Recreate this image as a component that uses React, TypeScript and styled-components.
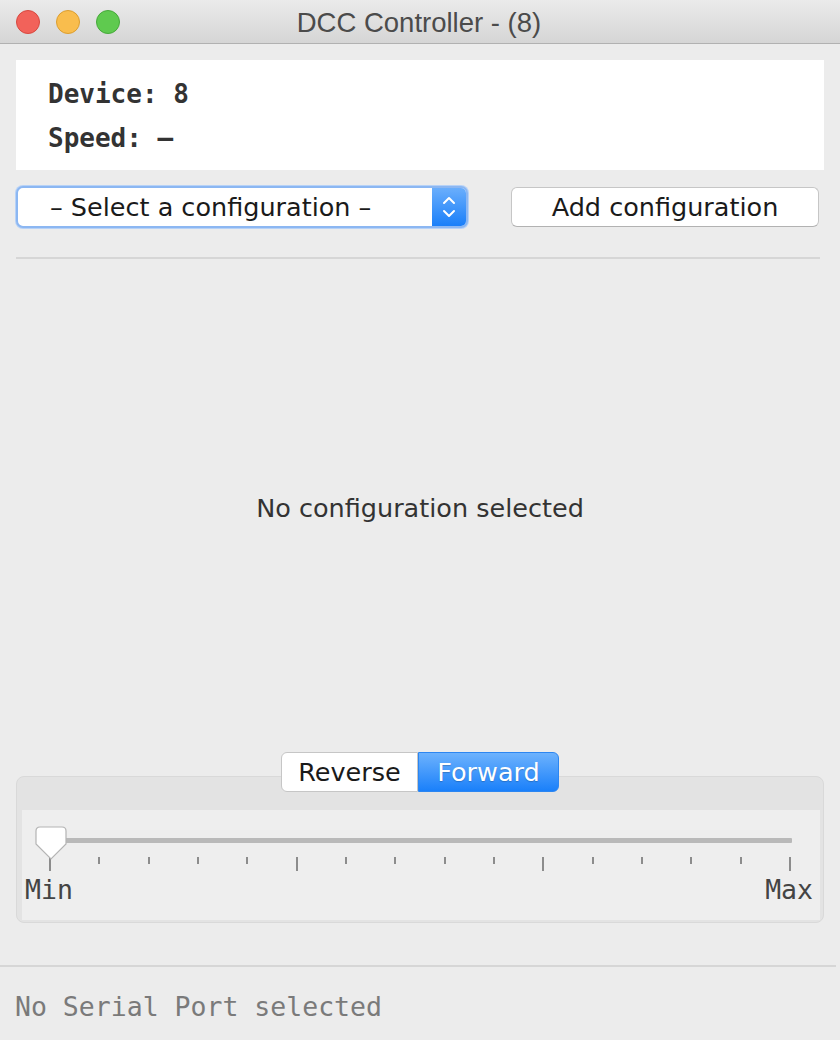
import React from "react";
import styled, { createGlobalStyle } from "styled-components";

const GlobalStyle = createGlobalStyle`
  html, body {
    margin: 0;
    padding: 0;
    background: #ececec;
  }
  * {
    box-sizing: border-box;
  }
`;

const TICKS = Array.from({ length: 16 }, (_, i) => i);

const App = () => {
  return (
    <Window>
      <GlobalStyle />
      <TitleBar>
        <Lights>
          <Light color="#f2625a" border="#d8483f" />
          <Light color="#f9bd4d" border="#dc9e2f" />
          <Light color="#5fca4f" border="#46a93a" />
        </Lights>
        <Title>DCC Controller - (8)</Title>
      </TitleBar>

      <Body>
        <InfoPanel>
          <InfoLine>Device: 8</InfoLine>
          <InfoLine>Speed: –</InfoLine>
        </InfoPanel>

        <ControlsRow>
          <Select>
            <SelectText>– Select a configuration –</SelectText>
            <Stepper>
              <svg width="16" height="28" viewBox="0 0 16 28">
                <path d="M3 10 L8 5 L13 10" stroke="#fff" strokeWidth="2" fill="none" strokeLinecap="round" strokeLinejoin="round" />
                <path d="M3 18 L8 23 L13 18" stroke="#fff" strokeWidth="2" fill="none" strokeLinecap="round" strokeLinejoin="round" />
              </svg>
            </Stepper>
          </Select>
          <PushButton>Add configuration</PushButton>
        </ControlsRow>

        <Divider />

        <Message>No configuration selected</Message>

        <DirectionRow>
          <Segment>Reverse</Segment>
          <Segment active>Forward</Segment>
        </DirectionRow>
        <GroupBox>
          <GroupInner>
            <TrackWrap>
              <Track />
              <Thumb>
                <svg width="32" height="35" viewBox="0 0 32 35">
                  <path
                    d="M5 1 H27 Q31 1 31 5 V18 L16 33 L1 18 V5 Q1 1 5 1 Z"
                    fill="#fff"
                    stroke="#b4b4b4"
                    strokeWidth="1.2"
                  />
                </svg>
              </Thumb>
            </TrackWrap>
            <Ticks>
              {TICKS.map((i) => (
                <Tick key={i} major={i % 5 === 0} />
              ))}
            </Ticks>
            <Labels>
              <span>Min</span>
              <span>Max</span>
            </Labels>
          </GroupInner>
        </GroupBox>
      </Body>

      <Footer>
        <StatusText>No Serial Port selected</StatusText>
      </Footer>
    </Window>
  );
};

export default App;

const Window = styled.div`
  width: 840px;
  height: 1040px;
  display: flex;
  flex-direction: column;
  background: #ececec;
  overflow: hidden;
`;

const TitleBar = styled.div`
  position: relative;
  height: 44px;
  flex-shrink: 0;
  display: flex;
  align-items: center;
  justify-content: center;
  padding-top: 3px;
  background: linear-gradient(#ebebeb, #d5d5d5);
  border-bottom: 1px solid #b1b1b1;
`;

const Lights = styled.div`
  position: absolute;
  left: 16px;
  top: 10px;
  display: flex;
  gap: 16px;
`;

const Light = styled.div<{ color: string; border: string }>`
  width: 24px;
  height: 24px;
  border-radius: 50%;
  background: ${(p) => p.color};
  border: 1px solid ${(p) => p.border};
`;

const Title = styled.div`
  font-family: "Liberation Sans", Arial, sans-serif;
  font-size: 27.5px;
  color: #4b4b4b;
  margin-left: -2px;
`;

const Body = styled.div`
  flex: 1;
  display: flex;
  flex-direction: column;
  padding: 16px 16px 0 16px;
`;

const InfoPanel = styled.div`
  height: 110px;
  background: #ffffff;
  padding: 12px 32px 0 32px;
`;

const InfoLine = styled.div`
  font-family: "DejaVu Sans Mono", monospace;
  font-weight: bold;
  font-size: 26px;
  line-height: 44px;
  color: #333;
`;

const ControlsRow = styled.div`
  display: flex;
  align-items: center;
  justify-content: space-between;
  margin-top: 16px;
  height: 42px;
`;

const Select = styled.div`
  width: 452px;
  height: 42px;
  display: flex;
  background: #fff;
  border: 2px solid #8cb7f2;
  border-radius: 7px;
  box-shadow: 0 0 0 1px #b7d2f7;
  overflow: hidden;
`;

const SelectText = styled.div`
  flex: 1;
  padding-left: 32px;
  font-family: "DejaVu Sans", sans-serif;
  font-size: 25.5px;
  line-height: 38px;
  color: #1a1a1a;
`;

const Stepper = styled.div`
  width: 34px;
  display: flex;
  align-items: center;
  justify-content: center;
  background: linear-gradient(#6aaefc, #1a7ff9);
`;

const PushButton = styled.div`
  width: 308px;
  height: 40px;
  margin-right: 5px;
  display: flex;
  align-items: center;
  justify-content: center;
  background: #fff;
  border: 1px solid #c6c6c6;
  border-bottom-color: #b2b2b2;
  border-radius: 6px;
  font-family: "DejaVu Sans", sans-serif;
  font-size: 25.5px;
  color: #1a1a1a;
`;

const Divider = styled.div`
  margin-top: 29px;
  margin-right: 4px;
  height: 2px;
  background: #d6d6d6;
`;

const Message = styled.div`
  flex: 1;
  display: flex;
  align-items: center;
  justify-content: center;
  padding-top: 4px;
  font-family: "DejaVu Sans", sans-serif;
  font-size: 25.5px;
  color: #333;
`;

const DirectionRow = styled.div`
  display: flex;
  justify-content: center;
  position: relative;
  z-index: 1;
  margin-bottom: -16px;
`;

const Segment = styled.div<{ active?: boolean }>`
  height: 40px;
  width: ${(p) => (p.active ? "141px" : "137px")};
  display: flex;
  align-items: center;
  justify-content: center;
  font-family: "DejaVu Sans", sans-serif;
  font-size: 25.5px;
  color: ${(p) => (p.active ? "#fff" : "#1a1a1a")};
  background: ${(p) => (p.active ? "linear-gradient(#6db2fd, #1a80fa)" : "#fff")};
  border: 1px solid ${(p) => (p.active ? "#2c86f1" : "#c6c6c6")};
  border-radius: ${(p) => (p.active ? "0 6px 6px 0" : "6px 0 0 6px")};
  text-shadow: ${(p) => (p.active ? "0 1px 1px rgba(0,0,0,0.2)" : "none")};
`;

const GroupBox = styled.div`
  height: 147px;
  padding: 33px 3px 2px 5px;
  background: #e3e3e3;
  border: 1px solid #d9d9d9;
  border-radius: 8px;
`;

const GroupInner = styled.div`
  height: 100%;
  background: #eeeeee;
  padding-top: 17px;
`;

const TrackWrap = styled.div`
  position: relative;
  height: 30px;
  margin: 0 28px;
  padding-top: 11px;
`;

const Track = styled.div`
  height: 5px;
  background: #b9b9b9;
  border-radius: 1px;
`;

const Thumb = styled.div`
  position: absolute;
  left: -15px;
  top: -1px;
  line-height: 0;
`;

const Ticks = styled.div`
  display: flex;
  justify-content: space-between;
  align-items: flex-start;
  margin: 0 29px 0 27px;
  height: 18px;
`;

const Tick = styled.div<{ major: boolean }>`
  width: 2px;
  height: ${(p) => (p.major ? "14px" : "7px")};
  background: #8c8c8c;
`;

const Labels = styled.div`
  display: flex;
  justify-content: space-between;
  padding: 0 7px 0 3px;
  font-family: "DejaVu Sans Mono", monospace;
  font-size: 26.5px;
  line-height: 30px;
  color: #444;
`;

const Footer = styled.div`
  margin-top: 42px;
  margin-right: 4px;
  border-top: 2px solid #d6d6d6;
  height: 75px;
  padding-left: 15px;
`;

const StatusText = styled.div`
  font-family: "DejaVu Sans Mono", monospace;
  font-size: 26.5px;
  line-height: 80px;
  color: #7a7a7a;
`;
